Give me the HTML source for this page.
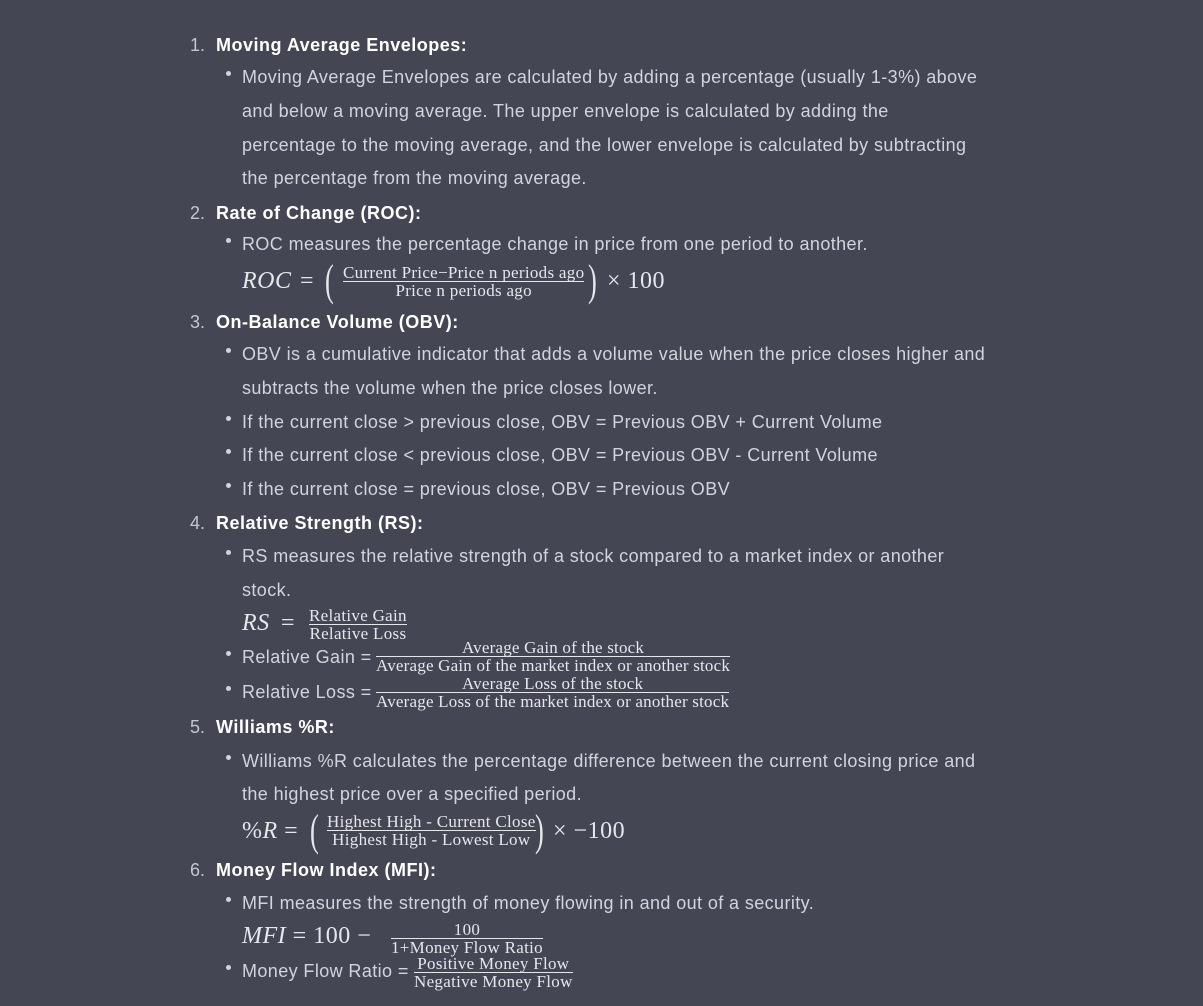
<!DOCTYPE html>
<html><head><meta charset="utf-8"><style>
html,body{margin:0;padding:0;background:#444654;width:1203px;height:1006px;overflow:hidden}
body{position:relative;font-family:"Liberation Sans",sans-serif;color:#d1d5db;font-size:18px;letter-spacing:0.4px}
.t{position:absolute;white-space:nowrap;line-height:24px;height:24px}
.h{color:#fff;font-weight:bold;letter-spacing:0.5px}
.n1{color:#c5c5d2;letter-spacing:0}
.b{position:absolute;width:5px;height:5px;border-radius:50%;background:#d1d5db}
.m{position:absolute;white-space:nowrap;font-family:"Liberation Serif",serif;color:#e5e7eb;line-height:28px;font-size:24px;letter-spacing:0.5px}
.i{font-style:italic}
.f{position:absolute;display:flex;flex-direction:column;align-items:center;font-family:"Liberation Serif",serif;color:#e5e7eb;white-space:nowrap;line-height:17px;font-size:17px;letter-spacing:0.3px}
.f .d{border-top:1px solid #e5e7eb;align-self:stretch;text-align:center}
.p{position:absolute;font-family:"Liberation Serif",serif;color:#e5e7eb;font-size:44px;line-height:44px;transform:scaleX(0.6);font-weight:100}
</style></head><body>

<div class="t n1" style="left:190px;top:33px">1.</div>
<div class="t h" style="left:216px;top:33px">Moving Average Envelopes:</div>
<div class="b" style="left:226px;top:71px"></div>
<div class="t" style="left:242px;top:65px">Moving Average Envelopes are calculated by adding a percentage (usually 1-3%) above</div>
<div class="t" style="left:242px;top:99px">and below a moving average. The upper envelope is calculated by adding the</div>
<div class="t" style="left:242px;top:133px">percentage to the moving average, and the lower envelope is calculated by subtracting</div>
<div class="t" style="left:242px;top:166px">the percentage from the moving average.</div>

<div class="t n1" style="left:190px;top:201px">2.</div>
<div class="t h" style="left:216px;top:201px">Rate of Change (ROC):</div>
<div class="b" style="left:226px;top:238px"></div>
<div class="t" style="left:242px;top:232px">ROC measures the percentage change in price from one period to another.</div>
<div class="m i" style="left:242px;top:267px">ROC</div>
<div class="m" style="left:300px;top:267px">=</div>
<div class="p" style="left:322px;top:259px">(</div>
<div class="f" style="left:343px;top:264px"><span>Current Price−Price n periods ago</span><span class="d">Price n periods ago</span></div>
<div class="p" style="left:585px;top:259px">)</div>
<div class="m" style="left:607px;top:267px">× 100</div>

<div class="t n1" style="left:190px;top:310px">3.</div>
<div class="t h" style="left:216px;top:310px">On-Balance Volume (OBV):</div>
<div class="b" style="left:226px;top:348px"></div>
<div class="t" style="left:242px;top:342px">OBV is a cumulative indicator that adds a volume value when the price closes higher and</div>
<div class="t" style="left:242px;top:376px">subtracts the volume when the price closes lower.</div>
<div class="b" style="left:226px;top:416px"></div>
<div class="t" style="left:242px;top:410px">If the current close &gt; previous close, OBV = Previous OBV + Current Volume</div>
<div class="b" style="left:226px;top:449px"></div>
<div class="t" style="left:242px;top:443px">If the current close &lt; previous close, OBV = Previous OBV - Current Volume</div>
<div class="b" style="left:226px;top:483px"></div>
<div class="t" style="left:242px;top:477px">If the current close = previous close, OBV = Previous OBV</div>

<div class="t n1" style="left:190px;top:511px">4.</div>
<div class="t h" style="left:216px;top:511px">Relative Strength (RS):</div>
<div class="b" style="left:226px;top:550px"></div>
<div class="t" style="left:242px;top:544px">RS measures the relative strength of a stock compared to a market index or another</div>
<div class="t" style="left:242px;top:578px">stock.</div>
<div class="m i" style="left:242px;top:609px">RS</div>
<div class="m" style="left:281px;top:609px">=</div>
<div class="f" style="left:309px;top:607px"><span>Relative Gain</span><span class="d">Relative Loss</span></div>
<div class="b" style="left:226px;top:651px"></div>
<div class="t" style="left:242px;top:645px">Relative Gain =</div>
<div class="f" style="left:376px;top:639px;letter-spacing:0.2px"><span>Average Gain of the stock</span><span class="d">Average Gain of the market index or another stock</span></div>
<div class="b" style="left:226px;top:686px"></div>
<div class="t" style="left:242px;top:680px">Relative Loss =</div>
<div class="f" style="left:376px;top:675px;letter-spacing:0.2px"><span>Average Loss of the stock</span><span class="d">Average Loss of the market index or another stock</span></div>

<div class="t n1" style="left:190px;top:715px">5.</div>
<div class="t h" style="left:216px;top:715px">Williams %R:</div>
<div class="b" style="left:226px;top:755px"></div>
<div class="t" style="left:242px;top:749px">Williams %R calculates the percentage difference between the current closing price and</div>
<div class="t" style="left:242px;top:782px">the highest price over a specified period.</div>
<div class="m" style="left:242px;top:817px">%<span class="i">R</span> =</div>
<div class="p" style="left:307px;top:809px">(</div>
<div class="f" style="left:327px;top:813px"><span>Highest High - Current Close</span><span class="d">Highest High - Lowest Low</span></div>
<div class="p" style="left:532px;top:809px">)</div>
<div class="m" style="left:553px;top:817px">× −100</div>

<div class="t n1" style="left:190px;top:858px">6.</div>
<div class="t h" style="left:216px;top:858px">Money Flow Index (MFI):</div>
<div class="b" style="left:226px;top:897px"></div>
<div class="t" style="left:242px;top:891px">MFI measures the strength of money flowing in and out of a security.</div>
<div class="m" style="left:242px;top:922px"><span class="i">MFI</span> = 100 −</div>
<div class="f" style="left:391px;top:921px;font-size:17px"><span>100</span><span class="d">1+Money Flow Ratio</span></div>
<div class="b" style="left:226px;top:965px"></div>
<div class="t" style="left:242px;top:959px">Money Flow Ratio =</div>
<div class="f" style="left:414px;top:955px"><span>Positive Money Flow</span><span class="d">Negative Money Flow</span></div>

</body></html>
